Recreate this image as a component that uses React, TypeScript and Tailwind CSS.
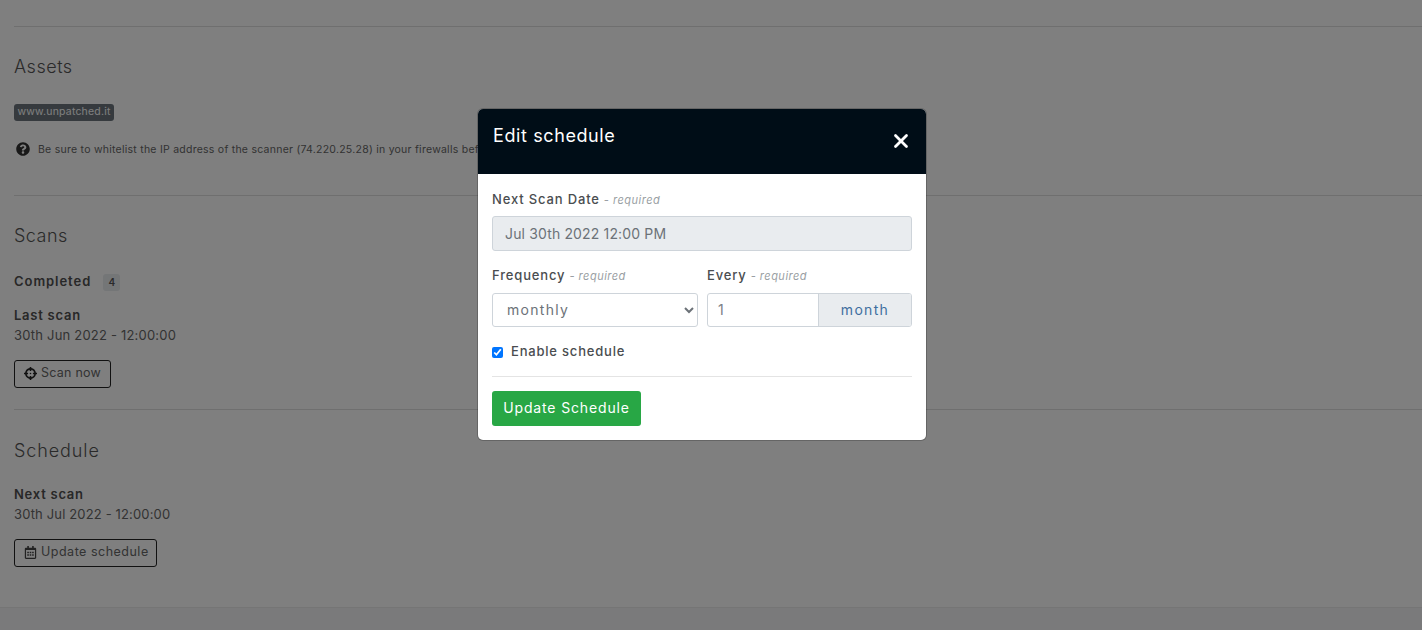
import { FaCrosshairs, FaQuestionCircle, FaRegCalendarAlt } from "react-icons/fa";
import { X } from "lucide-react";

const font = { fontFamily: '"Inter", "Open Sans", sans-serif' };

function Required({ label }: { label: string }) {
  return (
    <div className="h-[18px] text-[13px] leading-[18px] tracking-[0.85px]">
      <span className="font-medium text-[#4a4d50]">{label}</span>
      <span className="ml-1 text-[11px] italic tracking-[0.5px] text-[#9a9fa4]">- required</span>
    </div>
  );
}

function PageContent() {
  return (
    <div className="h-[630px] bg-[#f9f9f9] text-[#333] flex flex-col">
      <div className="flex-1 pl-[14px] bg-white">
        <div className="h-[27px] border-b border-[#dedede]" />
        <h2 className="mt-[29px] text-[18px] leading-[22px] font-light tracking-[0.5px] text-[#555]">Assets</h2>
        <div className="mt-[26px] w-[100px] h-[17px] rounded-[3px] bg-[#6c757d] text-center text-[10.5px] leading-[16px] text-white tracking-[0.2px]">
          www.unpatched.it
        </div>
        <div className="mt-[18px] flex items-center h-[22px] text-[10.5px] tracking-[0.25px] text-[#666]">
          <FaQuestionCircle className="ml-[2px] mr-[8px] mb-[2px] text-[14px] text-[#333] shrink-0" />
          <span>Be sure to whitelist the IP address of the scanner (74.220.25.28) in your firewalls before scanning</span>
        </div>
        <div className="mt-[34px] border-b border-[#dedede]" />
        <h2 className="mt-[29px] text-[18px] leading-[22px] font-light tracking-[0.5px] text-[#555]">Scans</h2>
        <div className="mt-[26px] flex items-center h-[18px]">
          <span className="text-[13px] font-semibold tracking-[0.95px] text-[#505050]">Completed</span>
          <span className="ml-[12px] w-[17px] h-[17px] rounded-[3px] bg-[#e9ecef] text-center text-[10px] leading-[17px] font-semibold text-[#555]">4</span>
        </div>
        <div className="mt-[15px] text-[13px] leading-[18px] font-semibold tracking-[0.75px] text-[#505050]">Last scan</div>
        <div className="mt-[2px] text-[13px] leading-[18px] tracking-[0.2px] text-[#666]">30th Jun 2022 - 12:00:00</div>
        <button className="mt-[16px] flex items-center w-[97px] h-[28px] pl-[9px] pb-[2px] rounded-[3px] border border-[#222] text-[12.5px] tracking-[0.25px] text-[#666]">
          <FaCrosshairs className="mr-[4px] text-[13px] text-[#222]" />
          Scan now
        </button>
        <div className="mt-[21px] border-b border-[#dedede]" />
        <h2 className="mt-[30px] text-[18px] leading-[22px] font-light tracking-[0.9px] text-[#555]">Schedule</h2>
        <div className="mt-[23px] text-[13px] leading-[18px] font-semibold tracking-[0.75px] text-[#505050]">Next scan</div>
        <div className="mt-[2px] text-[13px] leading-[18px] tracking-[0.15px] text-[#666]">30th Jul 2022 - 12:00:00</div>
        <button className="mt-[16px] flex items-center w-[143px] h-[28px] pl-[9px] pb-[2px] rounded-[3px] border border-[#222] text-[12.5px] tracking-[0.5px] text-[#666]">
          <FaRegCalendarAlt className="mr-[4px] text-[13px] text-[#444]" />
          Update schedule
        </button>
      </div>
      <div className="h-[23px] bg-[#f4f5f7] border-t border-[#ebebeb]" />
    </div>
  );
}

export default function App() {
  return (
    <div style={font} className="relative h-[630px] overflow-hidden">
      <PageContent />
      <div className="absolute inset-0 bg-black/50 flex justify-center pt-[109px] pr-[18px]">
        <div className="w-[448px] h-[331px] rounded-[5px] bg-white overflow-hidden shadow-[0_0_0_1px_rgba(0,0,0,0.2)]">
          <div className="h-[65px] bg-[#000d17] flex justify-between pl-[15px] pr-[14px]">
            <h3 className="mt-[15px] text-[18px] leading-[24px] text-white tracking-[0.6px]">Edit schedule</h3>
            <X size={22} strokeWidth={3} className="mt-[21px] text-white" />
          </div>
          <div className="px-[14px] pt-[16px]">
            <Required label="Next Scan Date" />
            <div className="mt-[8px] h-[35px] rounded-[3px] border border-[#ced4da] bg-[#e9ecef] pl-[12px] text-[14px] leading-[33px] tracking-[0.15px] text-[#6c7278]">
              Jul 30th 2022 12:00 PM
            </div>
            <div className="mt-[15px] flex gap-[9px]">
              <div className="w-[206px]">
                <Required label="Frequency" />
                <select
                  defaultValue="monthly"
                  className="mt-[9px] w-full h-[34px] rounded-[3px] border border-[#ced4da] bg-white pb-[1px] pl-[10px] text-[14px] tracking-[1.3px] text-[#6c7278]"
                >
                  <option>monthly</option>
                </select>
              </div>
              <div className="flex-1">
                <Required label="Every" />
                <div className="mt-[9px] flex h-[34px] rounded-[3px] border border-[#ced4da] overflow-hidden">
                  <div className="flex-1 pl-[10px] text-[14px] leading-[32px] text-[#7b8085]">1</div>
                  <div className="w-[93px] border-l border-[#ced4da] bg-[#e9ecef] text-center text-[14px] leading-[31px] tracking-[1.3px] text-[#3f6f9f]">
                    month
                  </div>
                </div>
              </div>
            </div>
            <label className="mt-[17px] flex items-center h-[16px] text-[13px] font-medium tracking-[0.8px] text-[#4a4d50]">
              <input type="checkbox" defaultChecked readOnly className="w-[11px] h-[11px] mr-[8px] accent-[#0075ff]" />
              Enable schedule
            </label>
            <div className="mt-[16px] border-t border-[#e4e4e4]" />
            <button className="mt-[14px] w-[149px] h-[35px] pb-[3px] rounded-[3px] bg-[#28a745] text-[14px] tracking-[0.85px] text-white">
              Update Schedule
            </button>
          </div>
        </div>
      </div>
    </div>
  );
}
